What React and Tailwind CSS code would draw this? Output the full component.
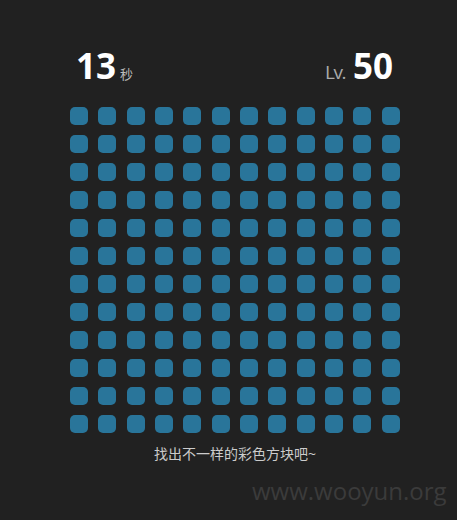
import React from 'react';

const cells = Array.from({ length: 144 }, (_, i) => i);

export default function App() {
  return (
    <div className="relative h-[520px] w-[457px] overflow-hidden bg-[#212121]" style={{ fontFamily: '"Open Sans", "Noto Sans CJK SC", sans-serif' }}>
      <div className="ml-[65px] w-[340px] pt-[48px]">
        <div className="flex items-baseline justify-between pl-[11px] pr-3">
          <div className="flex items-baseline gap-1">
            <span className="text-[35px] font-bold leading-none text-white">13</span>
            <span className="text-[13px] text-[#bbbbbb]">秒</span>
          </div>
          <div className="flex items-baseline gap-[8px]">
            <span className="text-[19px] tracking-[-1.5px] text-[#aaaaaa]">Lv.</span>
            <span className="text-[35px] font-bold leading-none text-white">50</span>
          </div>
        </div>
        <div className="mt-[15px] grid grid-cols-12">
          {cells.map((i) => (
            <div key={i} className="flex h-[28px] items-center justify-center">
              <div className="h-[18px] w-[18px] rounded-[5px] bg-[#29759a]" />
            </div>
          ))}
        </div>
        <p className="mt-[5px] text-center text-[14px] text-[#cccccc]">找出不一样的彩色方块吧~</p>
      </div>
      <div className="absolute left-[252px] top-[473px] text-[24px] text-[#3b3b3b]">www.wooyun.org</div>
    </div>
  );
}
